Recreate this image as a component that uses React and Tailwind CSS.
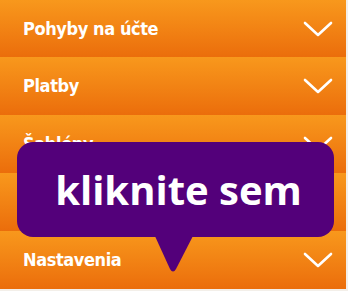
const items = ['Pohyby na účte', 'Platby', 'Šablóny', 'Služby', 'Nastavenia'];

function Chevron() {
  return (
    <svg width="30" height="16" viewBox="0 0 30 16" fill="none">
      <path d="M2 2 L15 14 L28 2" stroke="white" strokeWidth="2.6" strokeLinecap="round" strokeLinejoin="round" />
    </svg>
  );
}

export default function App() {
  return (
    <div className="relative w-[348px] h-[291px] bg-[#f3efe9] overflow-hidden">
      <ul className="flex flex-col w-[346px]">
        {items.map((label, i) => (
          <li
            key={label}
            className={`flex items-center justify-between pl-[23px] pr-[13px] bg-gradient-to-b from-[#f8981c] to-[#eb6d0b] ${
              i === 0 ? 'h-[57px]' : 'h-[58px]'
            }`}
          >
            <span
              className="text-white font-bold text-[18px] leading-none tracking-[-0.4px]"
              style={{ fontFamily: '"DejaVu Sans Condensed", "Roboto Condensed", Roboto, sans-serif' }}
            >
              {label}
            </span>
            <Chevron />
          </li>
        ))}
      </ul>

      {/* tooltip over the list */}
      <div className="absolute left-[17px] top-[142px] w-[317px] h-[95px] rounded-[16px] bg-[#53007a] flex items-center justify-center">
        <span className="text-white font-bold text-[40px] leading-none pl-[6px] font-['Open_Sans',sans-serif]">
          kliknite sem
        </span>
      </div>
      <svg className="absolute left-[154px] top-[234px]" width="40" height="40" viewBox="0 0 40 40">
        <path d="M0 0 L40 0 L22 35 Q19 40 16 35 Z" fill="#53007a" />
      </svg>
    </div>
  );
}
